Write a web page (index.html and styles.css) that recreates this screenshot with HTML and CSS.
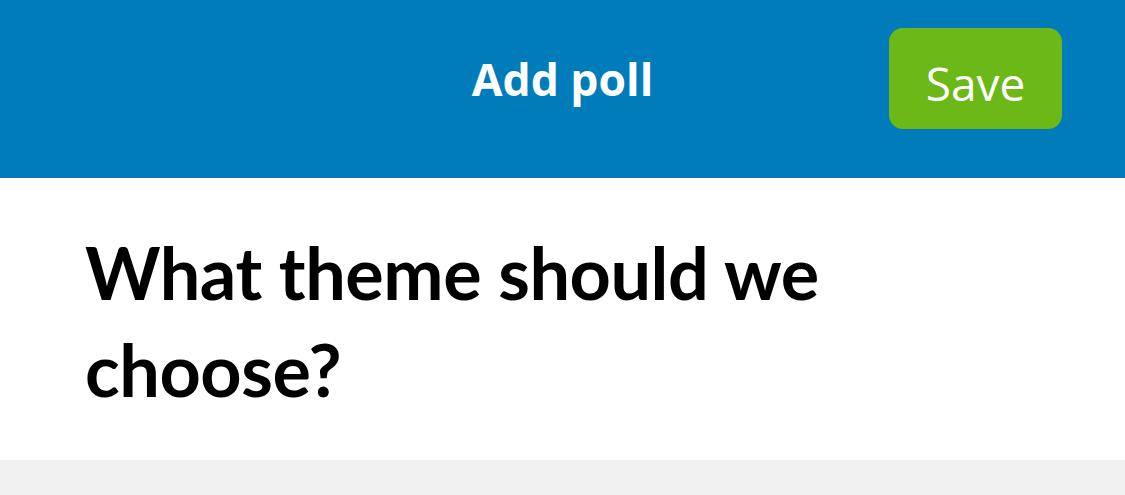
FILE: index.html
```html
<!DOCTYPE html>
<html lang="en">
<head>
    <meta charset="UTF-8">
    <meta name="viewport" content="width=device-width, initial-scale=1.0">
    <title>Add poll</title>
    <link rel="stylesheet" href="styles.css">
</head>
<body>
    <header class="topbar">
        <div></div>
        <h1 class="topbar-title">Add poll</h1>
        <button type="button" class="save-btn">Save</button>
    </header>

    <section class="question">
        <h2>What theme should we choose?</h2>
    </section>

    <div class="rest"></div>
</body>
</html>
```

FILE: styles.css
```css
body {
    margin: 0;
    font-family: "Open Sans", Arial, sans-serif;
    background-color: #f1f1f1;
}

.topbar {
    display: grid;
    grid-template-columns: 1fr auto 1fr;
    align-items: start;
    height: 178px;
    box-sizing: border-box;
    padding-top: 28px;
    background-color: #007cba;
    color: #fff;
}

.topbar-title {
    margin: 15px 0 0;
    font-size: 44.5px;
    font-weight: 700;
    line-height: 72px;
}

.save-btn {
    justify-self: end;
    width: 173px;
    height: 101px;
    margin-right: 63px;
    padding: 9px 0 0;
    font-family: "Open Sans", Arial, sans-serif;
    font-size: 46px;
    color: #fff;
    background-color: #6cb817;
    border: none;
    border-radius: 14px;
    cursor: pointer;
}

.question {
    height: 282px;
    box-sizing: border-box;
    padding: 46px 0 0 85px;
    background-color: #fff;
}

.question h2 {
    margin: 0;
    max-width: 780px;
    font-family: Lato, "Open Sans", sans-serif;
    font-size: 72px;
    font-weight: 700;
    letter-spacing: -0.45px;
    line-height: 97px;
    color: #000;
}

.rest {
    height: 35px;
}
```
